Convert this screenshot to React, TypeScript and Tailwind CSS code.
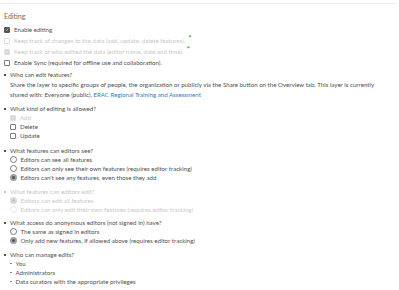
import React from 'react';

const Check = ({ checked = false, disabled = false }: { checked?: boolean; disabled?: boolean }) => {
    const border = disabled ? 'border-[#e0e0e0]' : 'border-[#7a7a7a]';
    const fill = checked ? (disabled ? 'bg-[#d6d6d6] border-[#d6d6d6]' : 'bg-[#555555] border-[#555555]') : 'bg-white';
    return (
        <span className={`w-[6px] h-[6px] rounded-[1px] border-[0.7px] ${border} ${fill} flex items-center justify-center shrink-0`}>
            {checked && (
                <svg viewBox="0 0 10 10" className="w-[5px] h-[5px]">
                    <path d="M2 5.2 L4.2 7.3 L8.2 2.8" fill="none" stroke="white" strokeWidth="1.6" />
                </svg>
            )}
        </span>
    );
};

const Radio = ({ checked = false, disabled = false }: { checked?: boolean; disabled?: boolean }) => {
    if (checked) {
        return (
            <span className={`w-[6.5px] h-[6.5px] rounded-full shrink-0 flex items-center justify-center ${disabled ? 'bg-[#dadada]' : 'bg-[#a0a0a0]'}`}>
                <span className={`w-[3.5px] h-[3.5px] rounded-full ${disabled ? 'bg-[#c2c2c2]' : 'bg-[#555555]'}`} />
            </span>
        );
    }
    return <span className={`w-[6.5px] h-[6.5px] rounded-full border-[0.7px] shrink-0 bg-white ${disabled ? 'border-[#e8e8e8]' : 'border-[#7a7a7a]'}`} />;
};

const Star = () => <span className="text-[#2fa83f] text-[8px] font-bold ml-[-1px] self-start leading-[7px]">*</span>;

const Row = ({ children, className = '' }: { children: React.ReactNode; className?: string }) => (
    <div className={`h-[9px] flex items-center gap-[4px] whitespace-nowrap ${className}`}>{children}</div>
);

const Question = ({ text, disabled = false }: { text: string; disabled?: boolean }) => (
    <Row className={disabled ? 'text-[#c6c6c6]' : ''}>
        <span className="w-[2px] h-[2px] bg-current shrink-0" />
        <span>{text}</span>
    </Row>
);

const Opt = ({ children, disabled = false }: { children: React.ReactNode; disabled?: boolean }) => (
    <Row className={`pl-[6px] ${disabled ? 'text-[#c8c8c8]' : ''}`}>{children}</Row>
);

export default function App() {
    return (
        <div className="w-[399px] h-[290px] bg-white overflow-hidden text-[#505050] text-[6.15px]" style={{ fontFamily: 'Lato, "Open Sans", sans-serif' }}>
            <div className="h-[4px] border-b border-[#ededed] mr-[2px]" />
            <div className="px-[4px]">
                <div className="h-[10px] mt-[7px] flex items-center text-[7px] text-[#6a6a6a]">Editing</div>
                <div className="mt-[3px]">
                    <div className="h-[11px] flex items-center gap-[4px]">
                        <Check checked />
                        <span>Enable editing</span>
                    </div>
                    <div className="h-[11px] flex items-center gap-[4px] text-[#c8c8c8]">
                        <Check disabled />
                        <span>Keep track of changes to the data (add, update, delete features).</span>
                        <Star />
                    </div>
                    <div className="h-[11px] flex items-center gap-[4px] text-[#c8c8c8]">
                        <Check checked disabled />
                        <span>Keep track of who edited the data (editor name, date and time).</span>
                        <Star />
                    </div>
                    <div className="h-[11px] flex items-center gap-[4px]">
                        <Check />
                        <span>Enable Sync (required for offline use and collaboration).</span>
                    </div>
                </div>

                <div className="mt-[2px]">
                    <Question text="Who can edit features?" />
                    <p className="mt-[1px] pl-[6px] leading-[10px] pr-[5px]">
                        Share the layer to specific groups of people, the organization or publicly via the Share button on the Overview tab. This layer is currently shared with: Everyone (public), <span className="text-[#2f7dc2]">ERAC Regional Training and Assessment</span>
                    </p>
                </div>

                <div className="mt-[4px]">
                    <Question text="What kind of editing is allowed?" />
                    <Opt disabled><Check checked disabled /><span>Add</span></Opt>
                    <Opt><Check /><span>Delete</span></Opt>
                    <Opt><Check /><span>Update</span></Opt>
                </div>

                <div className="mt-[6px]">
                    <Question text="What features can editors see?" />
                    <Opt><Radio /><span>Editors can see all features</span></Opt>
                    <Opt><Radio /><span>Editors can only see their own features (requires editor tracking)</span></Opt>
                    <Opt><Radio checked /><span>Editors can't see any features, even those they add</span></Opt>
                </div>

                <div className="mt-[5px]">
                    <Question text="What features can editors edit?" disabled />
                    <Opt disabled><Radio checked disabled /><span>Editors can edit all features</span></Opt>
                    <Opt disabled><Radio disabled /><span>Editors can only edit their own features (requires editor tracking)</span></Opt>
                </div>

                <div className="mt-[4px]">
                    <Question text="What access do anonymous editors (not signed in) have?" />
                    <Opt><Radio /><span>The same as signed in editors</span></Opt>
                    <Opt><Radio checked /><span>Only add new features, if allowed above (requires editor tracking)</span></Opt>
                </div>

                <div className="mt-[5px]">
                    <Question text="Who can manage edits?" />
                    {['You', 'Administrators', 'Data curators with the appropriate privileges'].map((t) => (
                        <Row key={t} className="pl-[6px] gap-[3px]">
                            <span className="w-[1.5px] h-[1.5px] bg-[#8a8a8a] shrink-0" />
                            <span>{t}</span>
                        </Row>
                    ))}
                </div>
            </div>
        </div>
    );
}
